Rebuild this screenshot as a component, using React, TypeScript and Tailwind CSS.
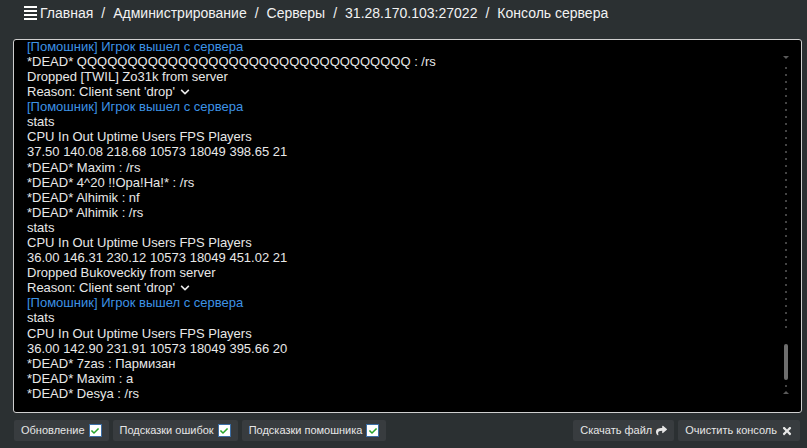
import React from "react";
import { FaShare, FaTimes, FaChevronDown, FaCheck } from "react-icons/fa";

type Line = { text: string; kind?: "helper" | "drop" };

const lines: Line[] = [
    { text: "[Помошник] Игрок вышел с сервера", kind: "helper" },
    { text: "*DEAD* QQQQQQQQQQQQQQQQQQQQQQQQQQQQQQQQQ : /rs" },
    { text: "Dropped [TWIL] Zo31k from server" },
    { text: "Reason: Client sent 'drop'", kind: "drop" },
    { text: "[Помошник] Игрок вышел с сервера", kind: "helper" },
    { text: "stats" },
    { text: "CPU In Out Uptime Users FPS Players" },
    { text: "37.50 140.08 218.68 10573 18049 398.65 21" },
    { text: "*DEAD* Maxim : /rs" },
    { text: "*DEAD* 4^20 !!Opa!Ha!* : /rs" },
    { text: "*DEAD* Alhimik : nf" },
    { text: "*DEAD* Alhimik : /rs" },
    { text: "stats" },
    { text: "CPU In Out Uptime Users FPS Players" },
    { text: "36.00 146.31 230.12 10573 18049 451.02 21" },
    { text: "Dropped Bukoveckiy from server" },
    { text: "Reason: Client sent 'drop'", kind: "drop" },
    { text: "[Помошник] Игрок вышел с сервера", kind: "helper" },
    { text: "stats" },
    { text: "CPU In Out Uptime Users FPS Players" },
    { text: "36.00 142.90 231.91 10573 18049 395.66 20" },
    { text: "*DEAD* 7zas : Пармизан" },
    { text: "*DEAD* Maxim : a" },
    { text: "*DEAD* Desya : /rs" },
];

const crumbs = ["Главная", "Администрирование", "Серверы", "31.28.170.103:27022", "Консоль сервера"];

const Check = () => (
    <span className="inline-flex items-center justify-center w-[13px] h-[13px] bg-white border border-[#3b6ea5] text-[#2aa52a]">
        <FaCheck size={8} />
    </span>
);

const ToolButton = ({ children }: { children: React.ReactNode }) => (
    <div className="flex items-center gap-[4px] h-[21px] px-[7px] bg-[#383c3f] rounded-[2px] text-[11px] text-[#e6e6e6]">
        {children}
    </div>
);

export default function App() {
    return (
        <div className="w-[807px] h-[448px] bg-[#2b3032] text-white flex flex-col" style={{ fontFamily: '"Liberation Sans", Arial, sans-serif' }}>
            {/* breadcrumb */}
            <div className="flex items-center h-[25px] pl-[24px] text-[14px] leading-[18px] font-medium text-[#f2f2f2] whitespace-nowrap">
                <span className="flex flex-col gap-[2px] w-[13px] mr-[3px]">
                    <span className="h-[2px] bg-white" />
                    <span className="h-[2px] bg-white" />
                    <span className="h-[2px] bg-white" />
                    <span className="h-[2px] bg-white" />
                </span>
                {crumbs.map((c, i) => (
                    <React.Fragment key={i}>
                        {i > 0 && <span className="mx-[8px]">/</span>}
                        <span>{c}</span>
                    </React.Fragment>
                ))}
            </div>

            {/* console */}
            <div className="relative ml-[13px] mr-[5px] mt-[14px] h-[374px] bg-black border border-[#cfcfcf] rounded-[3px] flex flex-col justify-end overflow-hidden pl-[13px] pb-[11px] text-[13px] leading-[15.1px] text-[#e8e8e8]">
                {lines.map((l, i) => (
                    <div key={i} className={"whitespace-nowrap " + (l.kind === "helper" ? "text-[#3d93e6]" : "")}>
                        {l.text}
                        {l.kind === "drop" && <FaChevronDown className="inline ml-[5px] mb-[2px]" size={10} />}
                    </div>
                ))}
                {/* scrollbar */}
                <div className="absolute right-[13px] top-[16px] bottom-[18px] w-[5px] flex flex-col items-center">
                    <span className="w-0 h-0 border-l-[3px] border-r-[3px] border-t-[3px] border-l-transparent border-r-transparent border-t-[#5a5a5a]" />
                    <div className="flex-1 flex flex-col items-center gap-[5px] mt-[8px] overflow-hidden">
                        {Array.from({ length: 38 }).map((_, i) => (
                            <span key={i} className="w-[2px] h-[2px] bg-[#444] shrink-0" />
                        ))}
                    </div>
                    <span className="w-[4px] h-[36px] rounded-full bg-[#6e6e6e] mt-[2px]" />
                    <span className="w-[2px] h-[2px] bg-[#444] mt-[5px]" />
                    <span className="w-0 h-0 border-l-[3px] border-r-[3px] border-b-[3px] border-l-transparent border-r-transparent border-b-[#5a5a5a] mt-[4px]" />
                </div>
            </div>

            {/* toolbar */}
            <div className="flex items-center gap-[4px] pl-[14px] pr-[7px] mt-[7px]">
                <ToolButton>Обновление <Check /></ToolButton>
                <ToolButton>Подсказки ошибок <Check /></ToolButton>
                <ToolButton>Подсказки помошника <Check /></ToolButton>
                <div className="flex-1" />
                <ToolButton>Скачать файл <FaShare size={11} /></ToolButton>
                <ToolButton>Очистить консоль <FaTimes size={12} /></ToolButton>
            </div>
        </div>
    );
}
